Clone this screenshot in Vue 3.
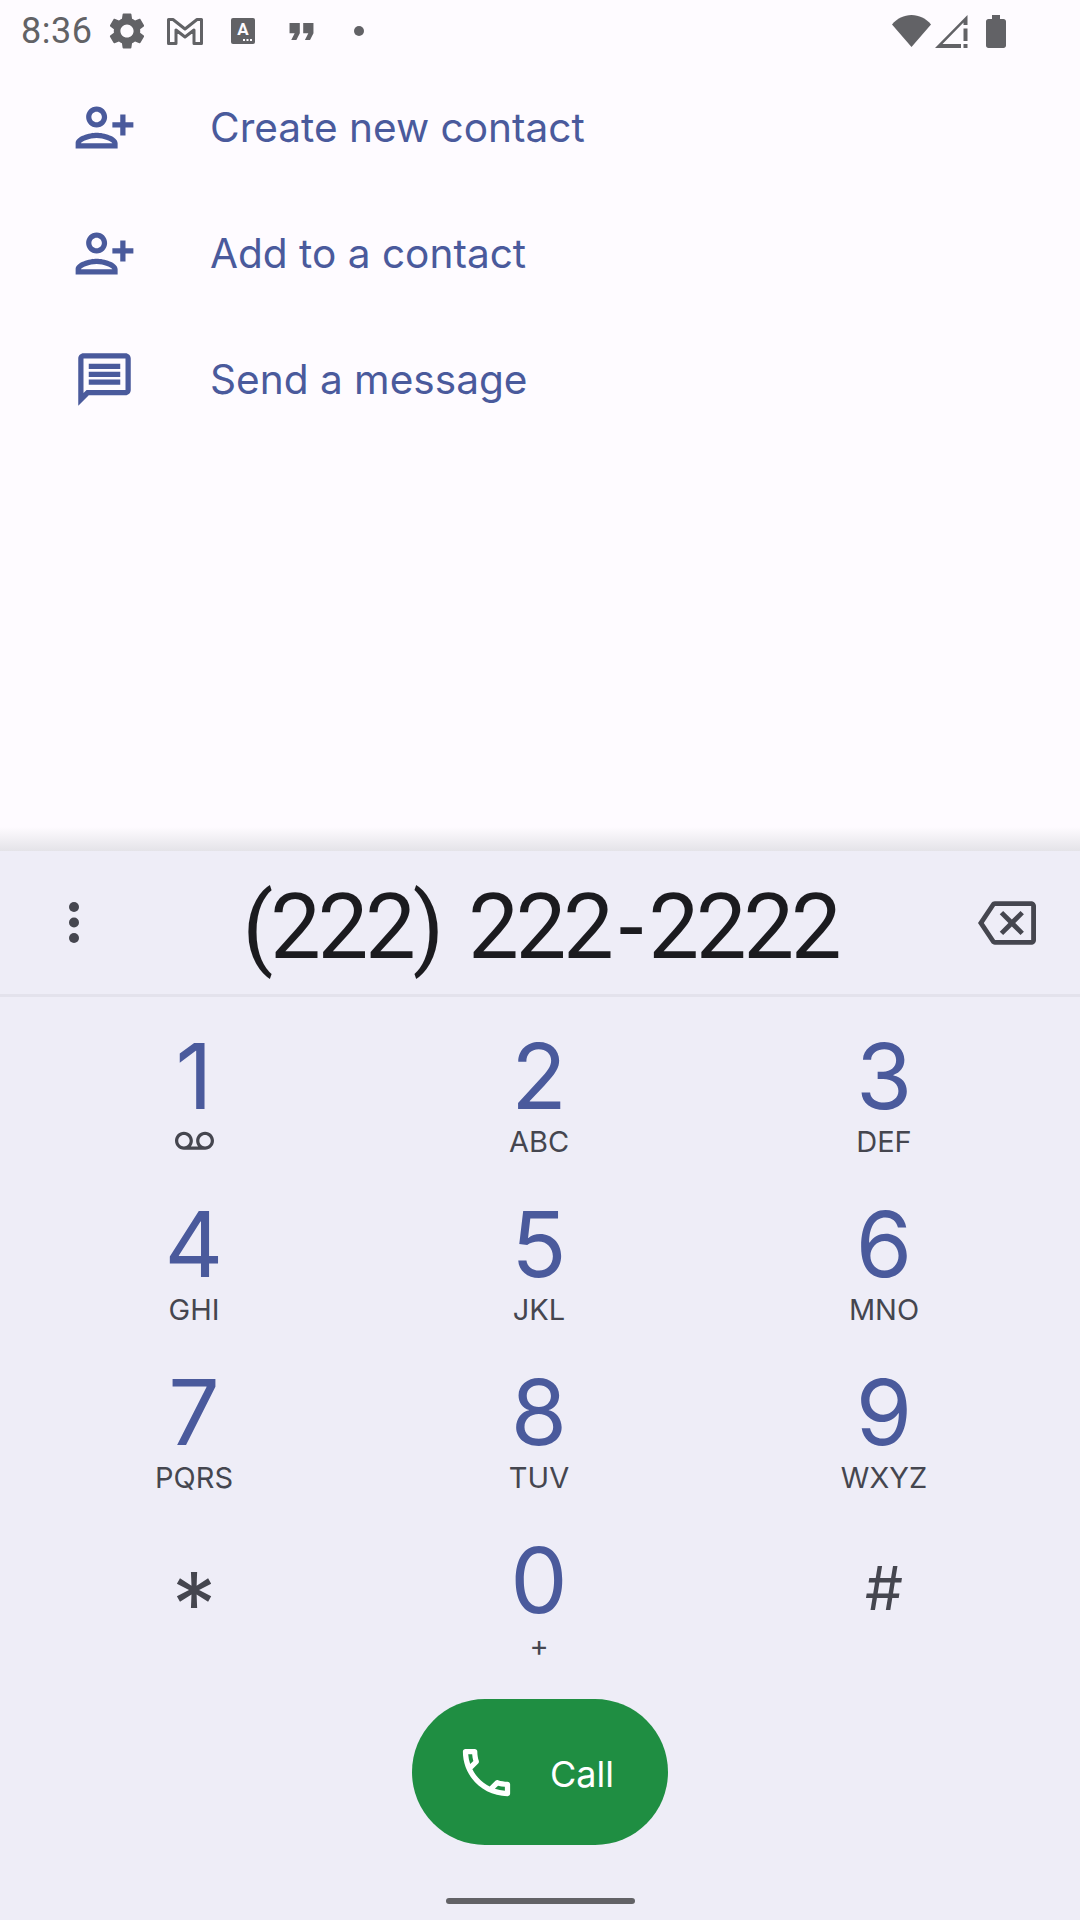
<template>
  <div class="phone">
    <header class="status-bar">
      <span class="clock">8:36</span>
      <span class="slot">
        <svg width="44" height="44" viewBox="0 0 24 24"><path fill="currentColor" d="M19.14 12.94c.04-.3.06-.61.06-.94 0-.32-.02-.64-.07-.94l2.03-1.58c.18-.14.23-.41.12-.61l-1.92-3.32c-.12-.22-.37-.29-.59-.22l-2.39.96c-.5-.38-1.03-.7-1.62-.94l-.36-2.54c-.04-.24-.24-.41-.48-.41h-3.84c-.24 0-.43.17-.47.41l-.36 2.54c-.59.24-1.13.57-1.62.94l-2.39-.96c-.22-.08-.47 0-.59.22L2.74 8.87c-.12.21-.08.47.12.61l2.03 1.58c-.05.3-.09.63-.09.94s.02.64.07.94l-2.03 1.58c-.18.14-.23.41-.12.61l1.92 3.32c.12.22.37.29.59.22l2.39-.96c.5.38 1.03.7 1.62.94l.36 2.54c.05.24.24.41.48.41h3.84c.24 0 .44-.17.47-.41l.36-2.54c.59-.24 1.13-.56 1.62-.94l2.39.96c.22.08.47 0 .59-.22l1.92-3.32c.12-.22.07-.47-.12-.61l-2.01-1.58zM12 15.6c-1.98 0-3.6-1.62-3.6-3.6s1.62-3.6 3.6-3.6 3.6 1.62 3.6 3.6-1.62 3.6-3.6 3.6z" /></svg>
      </span>
      <span class="slot">
        <svg width="36" height="27" viewBox="0 0 36 27"><path fill="none" stroke="currentColor" stroke-width="3" stroke-linejoin="round" d="M1.5 25.5V1.5H6L18 11 30 1.5h4.5v24H27V12l-9 7-9-7v13.500z" /></svg>
      </span>
      <span class="slot">
        <svg width="24" height="26" viewBox="0 0 24 26">
          <rect width="24" height="26" rx="2" fill="currentColor" />
          <text x="12" y="17" text-anchor="middle" class="note-letter">A</text>
          <path fill="#fefbff" d="M12 21h2v2h-2zM15.500 21h2v2h-2zM19 21h2v2h-2z" />
        </svg>
      </span>
      <span class="slot">
        <svg width="41" height="41" viewBox="0 0 24 24"><path fill="currentColor" d="M6 17h3l2-4V7H5v6h3zm8 0h3l2-4V7h-6v6h3z" /></svg>
      </span>
      <span class="slot">
        <svg width="10" height="10" viewBox="0 0 10 10"><circle cx="5" cy="5" r="5" fill="currentColor" /></svg>
      </span>

      <span class="status-right">
        <svg width="39" height="32" viewBox="0 0 39 32"><path fill="currentColor" d="M19.500 32 0 9.500C5 3.500 12 0 19.500 0S34 3.500 39 9.500z" /></svg>
        <svg width="33" height="33" viewBox="0 0 33 33"><path fill="currentColor" fill-rule="evenodd" d="M32.500 0v10h-4V7.500L7.500 29H26v4H0zM28.500 13.500h4V26h-4zM28.500 29h4v4h-4z" /></svg>
        <svg width="20" height="33" viewBox="0 0 20 33"><path fill="currentColor" d="M6 0h8v4h3.500c1.400 0 2.500 1.100 2.500 2.500V30.500c0 1.400-1.100 2.500-2.500 2.500h-15C1.100 33 0 31.900 0 30.500V6.500C0 5.100 1.100 4 2.500 4H6z" /></svg>
      </span>
    </header>

    <ul class="actions">
      <li v-for="action in actions" :key="action.label" class="action">
        <span class="action-icon">
          <svg v-if="action.icon === 'person'" class="flip" width="63" height="63" viewBox="0 0 24 24"><path fill="currentColor" d="M15 12c2.210 0 4-1.790 4-4s-1.790-4-4-4-4 1.790-4 4 1.790 4 4 4zm0-6c1.100 0 2 .9 2 2s-.9 2-2 2-2-.9-2-2 .9-2 2-2zm0 8c-2.670 0-8 1.340-8 4v2h16v-2c0-2.660-5.330-4-8-4zm-6 4c.22-.72 3.310-2 6-2 2.700 0 5.800 1.290 6 2H9zm-3-3v-3h3v-2H6V7H4v3H1v2h3v3h2z" /></svg>
          <svg v-else width="63" height="63" viewBox="0 0 24 24"><path fill="currentColor" d="M20 2H4c-1.100 0-2 .9-2 2v18l4-4h14c1.100 0 2-.9 2-2V4c0-1.100-.9-2-2-2zm0 14H5.170L4 17.170V4h16v12zM6 12h12v2H6zm0-3h12v2H6zm0-3h12v2H6z" /></svg>
        </span>
        <span class="action-label">{{ action.label }}</span>
      </li>
    </ul>

    <div class="shadow"></div>

    <section class="dialpad">
      <div class="number-row">
        <svg class="more" width="10" height="41" viewBox="0 0 10 41">
          <circle cx="5" cy="5" r="5" fill="currentColor" />
          <circle cx="5" cy="20.500" r="5" fill="currentColor" />
          <circle cx="5" cy="36" r="5" fill="currentColor" />
        </svg>
        <span class="number">(222) 222<span class="dash">-</span>2222</span>
        <svg class="backspace" width="58" height="58" viewBox="0 0 24 24"><path fill="currentColor" d="M22 3H7c-.69 0-1.230.35-1.590.88L0 12l5.410 8.110c.36.53.9.89 1.590.89h15c1.100 0 2-.9 2-2V5c0-1.100-.9-2-2-2zm0 16H7.070L2.400 12l4.660-7H22v14zm-11.590-2L14 13.410 17.590 17 19 15.590 15.410 12 19 8.410 17.590 7 14 10.590 10.410 7 9 8.410 12.590 12 9 15.590z" /></svg>
      </div>

      <div class="keys">
        <div v-for="key in keys" :key="key.digit" class="key">
          <span class="digit" :class="key.symbol">{{ key.digit }}</span>
          <svg v-if="key.voicemail" class="voicemail" width="39" height="39" viewBox="0 0 24 24"><path fill="currentColor" d="M18.500 6C15.460 6 13 8.460 13 11.500c0 1.330.47 2.550 1.260 3.500H9.740c.79-.95 1.260-2.170 1.260-3.500C11 8.460 8.540 6 5.500 6S0 8.460 0 11.500 2.460 17 5.500 17h13c3.040 0 5.500-2.460 5.500-5.500S21.540 6 18.500 6zm-13 9C3.570 15 2 13.430 2 11.500S3.570 8 5.500 8 9 9.570 9 11.500 7.430 15 5.500 15zm13 0c-1.930 0-3.500-1.570-3.500-3.500S16.570 8 18.500 8 22 9.570 22 11.500 20.430 15 18.500 15z" /></svg>
          <span v-else-if="key.letters" class="letters">{{ key.letters }}</span>
        </div>
      </div>

      <button class="call" type="button">
        <svg width="63" height="63" viewBox="0 0 24 24"><path fill="currentColor" d="M6.540 5c.06.89.21 1.760.45 2.590l-1.200 1.200c-.41-1.200-.67-2.470-.76-3.790h1.510m9.860 12.020c.85.24 1.720.39 2.600.45v1.490c-1.320-.09-2.590-.35-3.800-.75l1.200-1.190M7.500 3H4c-.55 0-1 .45-1 1 0 9.390 7.610 17 17 17 .55 0 1-.45 1-1v-3.490c0-.55-.45-1-1-1-1.240 0-2.450-.2-3.570-.57-.1-.04-.21-.05-.31-.05-.26 0-.51.1-.71.29l-2.200 2.200c-2.830-1.450-5.150-3.760-6.590-6.590l2.200-2.200c.28-.28.36-.67.25-1.020C8.700 6.450 8.500 5.250 8.500 4c0-.55-.45-1-1-1z" /></svg>
        <span>Call</span>
      </button>

      <div class="home-bar"></div>
    </section>
  </div>
</template>

<script setup>
const actions = [
  { label: "Create new contact", icon: "person" },
  { label: "Add to a contact", icon: "person" },
  { label: "Send a message", icon: "message" },
];

const keys = [
  { digit: "1", voicemail: true },
  { digit: "2", letters: "ABC" },
  { digit: "3", letters: "DEF" },
  { digit: "4", letters: "GHI" },
  { digit: "5", letters: "JKL" },
  { digit: "6", letters: "MNO" },
  { digit: "7", letters: "PQRS" },
  { digit: "8", letters: "TUV" },
  { digit: "9", letters: "WXYZ" },
  { digit: "*", symbol: "star" },
  { digit: "0", letters: "+" },
  { digit: "#", symbol: "hash" },
];
</script>

<style>
html,
body {
  margin: 0;
  background: #fefbff;
}
</style>

<style scoped>
.phone {
  display: flex;
  flex-direction: column;
  width: 1080px;
  height: 1920px;
  overflow: hidden;
  background: #fefbff;
  font-family: Inter, Roboto, sans-serif;
}

.status-bar {
  display: flex;
  align-items: center;
  flex: 0 0 auto;
  height: 62px;
  padding: 0 74px 0 21px;
  color: #626266;
}

.clock {
  width: 77px;
  font-family: Roboto, sans-serif;
  font-size: 36px;
  letter-spacing: 0.5px;
  white-space: nowrap;
}

.slot {
  display: flex;
  align-items: center;
  justify-content: center;
  width: 58px;
}

.note-letter {
  fill: #fefbff;
  font-family: Roboto, sans-serif;
  font-size: 17px;
  font-weight: 700;
}

.status-right {
  display: flex;
  align-items: center;
  gap: 4px;
  margin-left: auto;
}

.status-right svg:last-child {
  margin-left: 14px;
}

.actions {
  flex: 0 0 auto;
  margin: 0;
  padding: 2px 0 0;
  list-style: none;
}

.action {
  display: flex;
  align-items: center;
  height: 126px;
  color: #4a5a9c;
}

.action-icon {
  display: flex;
  flex: 0 0 auto;
  box-sizing: border-box;
  width: 210px;
  padding-left: 73px;
}

.flip {
  transform: scaleX(-1);
}

.action-label {
  font-size: 40.600px;
}

.shadow {
  flex: 1 1 auto;
  max-height: 24px;
  margin-top: auto;
  background: linear-gradient(#fefbff, #e4e3e8);
}

.dialpad {
  display: flex;
  flex-direction: column;
  align-items: center;
  flex: 0 0 1069px;
  background: #eeedf7;
}

.number-row {
  display: flex;
  align-items: center;
  justify-content: space-between;
  align-self: stretch;
  box-sizing: border-box;
  height: 146px;
  padding: 0 44px 0 69px;
  border-bottom: 3px solid #e3e2ec;
  color: #45464f;
}

.number {
  margin-left: 24px;
  padding-top: 10px;
  color: #1b1b1f;
  font-family: Roboto, sans-serif;
  font-size: 90px;
  letter-spacing: -3.100px;
  word-spacing: 8px;
  white-space: pre;
}

.dash {
  margin: 0 8px;
}

.keys {
  display: grid;
  grid-template-columns: repeat(3, 345px);
  grid-auto-rows: 168px;
  margin-right: 2px;
}

.key {
  display: flex;
  flex-direction: column;
  align-items: center;
  color: #45464f;
}

.digit {
  height: 108px;
  margin-top: 25px;
  color: #4a5a9c;
  font-size: 91px;
  line-height: 108px;
}

.digit.hash {
  margin-top: 33px;
  color: #45464f;
  font-size: 60px;
}

.digit.star {
  margin-top: 49px;
  color: #45464f;
  font-size: 88px;
}

.letters {
  margin-top: -3px;
  font-size: 29px;
  line-height: 30px;
}

.voicemail {
  margin-top: -8px;
}

.call {
  display: flex;
  align-items: center;
  gap: 32px;
  box-sizing: border-box;
  width: 256px;
  height: 146px;
  margin-top: 30px;
  padding: 0 0 0 43px;
  border: 0;
  border-radius: 73px;
  background: #1f8e42;
  color: #fff;
  font-family: inherit;
  font-size: 36px;
}

.call span {
  padding-top: 4px;
}

.home-bar {
  width: 189px;
  height: 6px;
  margin-top: 53px;
  border-radius: 3px;
  background: #626266;
}
</style>
